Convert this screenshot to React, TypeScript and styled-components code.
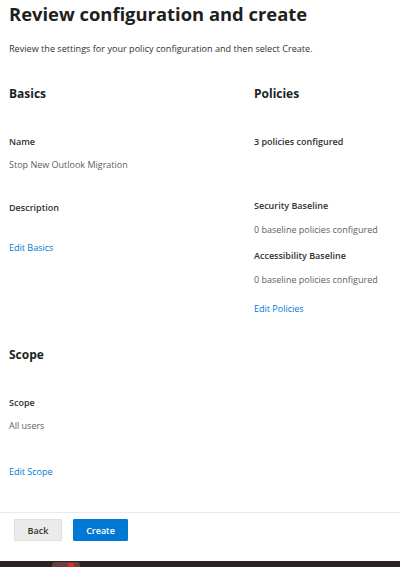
import React from "react";
import styled, { createGlobalStyle } from "styled-components";

const Global = createGlobalStyle`
  html, body { margin: 0; padding: 0; background: #ffffff; }
  body { font-family: "Open Sans", "Noto Sans", "Liberation Sans", sans-serif; color: #323130; }
  * { box-sizing: border-box; }
`;

const Page = styled.div`
  width: 400px;
  height: 567px;
  display: flex;
  flex-direction: column;
  overflow: hidden;
`;

const Content = styled.main`
  flex: 1;
  padding: 0 9px;
  display: flex;
  flex-direction: column;
`;

const Title = styled.h1`
  margin: 0;
  font-size: 18.4px;
  line-height: 28px;
  font-weight: 700;
  color: #201f1e;
`;

const Subtitle = styled.p`
  margin: 13px 0 0;
  font-size: 9.1px;
  line-height: 16px;
  color: #323130;
`;

const Columns = styled.div`
  display: grid;
  grid-template-columns: 245px 1fr;
  margin-top: 29px;
`;

const Column = styled.section`
  display: flex;
  flex-direction: column;
  align-items: flex-start;
`;

const SectionTitle = styled.h2<{ $mt?: number }>`
  margin: ${(p) => p.$mt ?? 0}px 0 0;
  font-size: 12px;
  line-height: 16px;
  font-weight: 700;
  color: #201f1e;
`;

const Label = styled.div<{ $mt: number }>`
  margin-top: ${(p) => p.$mt}px;
  font-size: 9px;
  line-height: 16px;
  font-weight: 600;
  color: #323130;
`;

const Value = styled.div<{ $mt: number }>`
  margin-top: ${(p) => p.$mt}px;
  font-size: 9px;
  line-height: 16px;
  color: #605e5c;
`;

const EditLink = styled.a<{ $mt: number }>`
  margin-top: ${(p) => p.$mt}px;
  font-size: 9px;
  line-height: 16px;
  color: #0078d4;
  text-decoration: none;
  cursor: pointer;
`;

const Footer = styled.footer`
  height: 49px;
  border-top: 1px solid #edebe9;
  padding: 6px 14px 0;
  display: flex;
  align-items: flex-start;
  gap: 11px;
`;

const Button = styled.button<{ $primary?: boolean }>`
  height: 22px;
  padding: 0;
  width: ${(p) => (p.$primary ? 55 : 48)}px;
  border-radius: 1px;
  border: 1px solid ${(p) => (p.$primary ? "#0078d4" : "#e1dfdd")};
  background: ${(p) => (p.$primary ? "#0078d4" : "#ebebeb")};
  color: ${(p) => (p.$primary ? "#ffffff" : "#323130")};
  font-family: inherit;
  font-size: 9px;
  font-weight: 600;
  cursor: pointer;
`;

const Taskbar = styled.div`
  height: 6px;
  background: #2b2321;
  display: flex;
  align-items: flex-end;
  padding-left: 52px;
`;

const TaskItem = styled.div`
  width: 28px;
  height: 5px;
  border-radius: 3px 3px 0 0;
  background: #6b3e44;
  display: flex;
  justify-content: flex-end;
  padding-right: 6px;
`;

const TaskDot = styled.span`
  width: 6px;
  height: 4px;
  margin-top: 1px;
  background: #e0302a;
  border-radius: 1px 1px 0 0;
`;

export default function App() {
  return (
    <>
      <Global />
      <Page>
        <Content>
          <Title>Review configuration and create</Title>
          <Subtitle>Review the settings for your policy configuration and then select Create.</Subtitle>
          <Columns>
            <Column>
              <SectionTitle>Basics</SectionTitle>
              <Label $mt={32}>Name</Label>
              <Value $mt={7}>Stop New Outlook Migration</Value>
              <Label $mt={27}>Description</Label>
              <EditLink $mt={24}>Edit Basics</EditLink>
            </Column>
            <Column>
              <SectionTitle>Policies</SectionTitle>
              <Label $mt={32}>3 policies configured</Label>
              <Label $mt={48}>Security Baseline</Label>
              <Value $mt={8}>0 baseline policies configured</Value>
              <Label $mt={10}>Accessibility Baseline</Label>
              <Value $mt={8}>0 baseline policies configured</Value>
              <EditLink $mt={13}>Edit Policies</EditLink>
            </Column>
          </Columns>
          <Column>
            <SectionTitle $mt={30}>Scope</SectionTitle>
            <Label $mt={32}>Scope</Label>
            <Value $mt={7}>All users</Value>
            <EditLink $mt={30}>Edit Scope</EditLink>
          </Column>
        </Content>
        <Footer>
          <Button>Back</Button>
          <Button $primary>Create</Button>
        </Footer>
        <Taskbar>
          <TaskItem>
            <TaskDot />
          </TaskItem>
        </Taskbar>
      </Page>
    </>
  );
}
